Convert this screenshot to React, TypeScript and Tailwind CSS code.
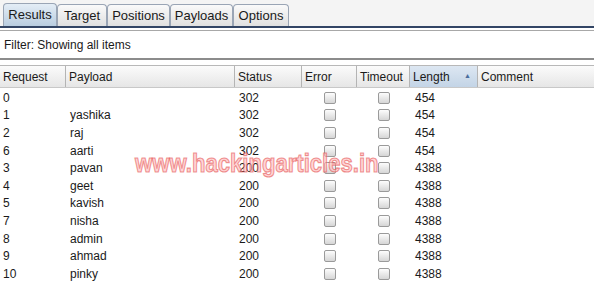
import React from "react";

const rows: [string, string, string, string][] = [
  ["0", "", "302", "454"],
  ["1", "yashika", "302", "454"],
  ["2", "raj", "302", "454"],
  ["6", "aarti", "302", "454"],
  ["3", "pavan", "200", "4388"],
  ["4", "geet", "200", "4388"],
  ["5", "kavish", "200", "4388"],
  ["7", "nisha", "200", "4388"],
  ["8", "admin", "200", "4388"],
  ["9", "ahmad", "200", "4388"],
  ["10", "pinky", "200", "4388"],
];

const Box = () => (
  <div className="w-[12px] h-[12px] rounded-[2px] border border-[#9a9a9a] bg-gradient-to-b from-[#fdfdfd] to-[#d6d6d6]" />
);

const tabs = ["Results", "Target", "Positions", "Payloads", "Options"];
const tabW = ["w-[54px]", "w-[50px]", "w-[63px]", "w-[63px]", "w-[56px]"];

export default function App() {
  return (
    <div
      className="relative w-[594px] h-[282px] bg-white overflow-hidden text-[#1a1a1a]"
      style={{ fontFamily: '"Liberation Sans", Arial, sans-serif' }}
    >
      {/* tabs */}
      <div className="flex items-end h-[26px] pl-[3px] bg-[#f4f4f4]">
        {tabs.map((t, i) => (
          <div
            key={t}
            className={`${tabW[i]} flex items-center justify-center text-[13px] border border-b-0 border-[#9aa5b5] rounded-t-[4px] ${
              i === 0
                ? "h-[23px] bg-gradient-to-b from-[#e4edf6] to-[#b9cde0]"
                : "h-[22px] bg-gradient-to-b from-[#fafafa] to-[#e0e0e0]"
            }`}
          >
            {t}
          </div>
        ))}
      </div>
      <div className="h-[2px] bg-[#324565]" />
      <div className="h-[2px] bg-white" />
      <div className="h-[1px] bg-[#a8a8a8]" />
      {/* filter */}
      <div className="h-[27px] flex items-center pl-[4px] text-[12px] bg-white">
        Filter: Showing all items
      </div>
      <div className="h-[2px] bg-[#8c8c8c]" />
      <div className="h-[5px] bg-white" />
      {/* header */}
      <div className="flex h-[23px] text-[12px] border-t border-[#b8b8b8] border-b border-b-[#c8c8c8]">
        {[
          ["Request", "w-[66px]"],
          ["Payload", "w-[169px]"],
          ["Status", "w-[67px]"],
          ["Error", "w-[55px]"],
          ["Timeout", "w-[53px]"],
        ].map(([l, w]) => (
          <div
            key={l}
            className={`${w} flex items-center pl-[3px] border-r border-[#b4b4b4] bg-gradient-to-b from-[#fbfbfb] to-[#e6e6e6]`}
          >
            {l}
          </div>
        ))}
        <div className="w-[68px] flex items-center justify-between pl-[3px] pr-[6px] border-r border-[#b4b4b4] bg-gradient-to-b from-[#dde7f2] to-[#c3d4e6]">
          <span>Length</span>
          <span className="text-[7px] text-[#4a6c9c]">▲</span>
        </div>
        <div className="flex-1 flex items-center pl-[3px] bg-gradient-to-b from-[#fbfbfb] to-[#e6e6e6]">
          Comment
        </div>
      </div>
      {/* rows */}
      <div className="pt-[1px]">
        {rows.map(([r, p, s, l]) => (
          <div key={r} className="flex h-[17.6px] items-center text-[12px]">
            <div className="w-[66px] pl-[3px]">{r}</div>
            <div className="w-[169px] pl-[4px]">{p}</div>
            <div className="w-[67px] pl-[4px]">{s}</div>
            <div className="w-[55px] flex justify-center pl-[1px]">
              <Box />
            </div>
            <div className="w-[53px] flex justify-center pl-[1px]">
              <Box />
            </div>
            <div className="w-[68px] pl-[5px]">{l}</div>
            <div className="flex-1" />
          </div>
        ))}
      </div>
      {/* watermark */}
      <div
        className="absolute left-[135px] top-[150px] text-[26px] font-bold leading-none origin-left scale-x-[0.85] text-[rgba(255,185,185,0.6)] pointer-events-none whitespace-nowrap"
        style={{ fontFamily: '"Liberation Sans", Arial, sans-serif', WebkitTextStroke: "1.2px rgba(228,80,80,0.6)" }}
      >
        www.hackingarticles.in
      </div>
    </div>
  );
}
